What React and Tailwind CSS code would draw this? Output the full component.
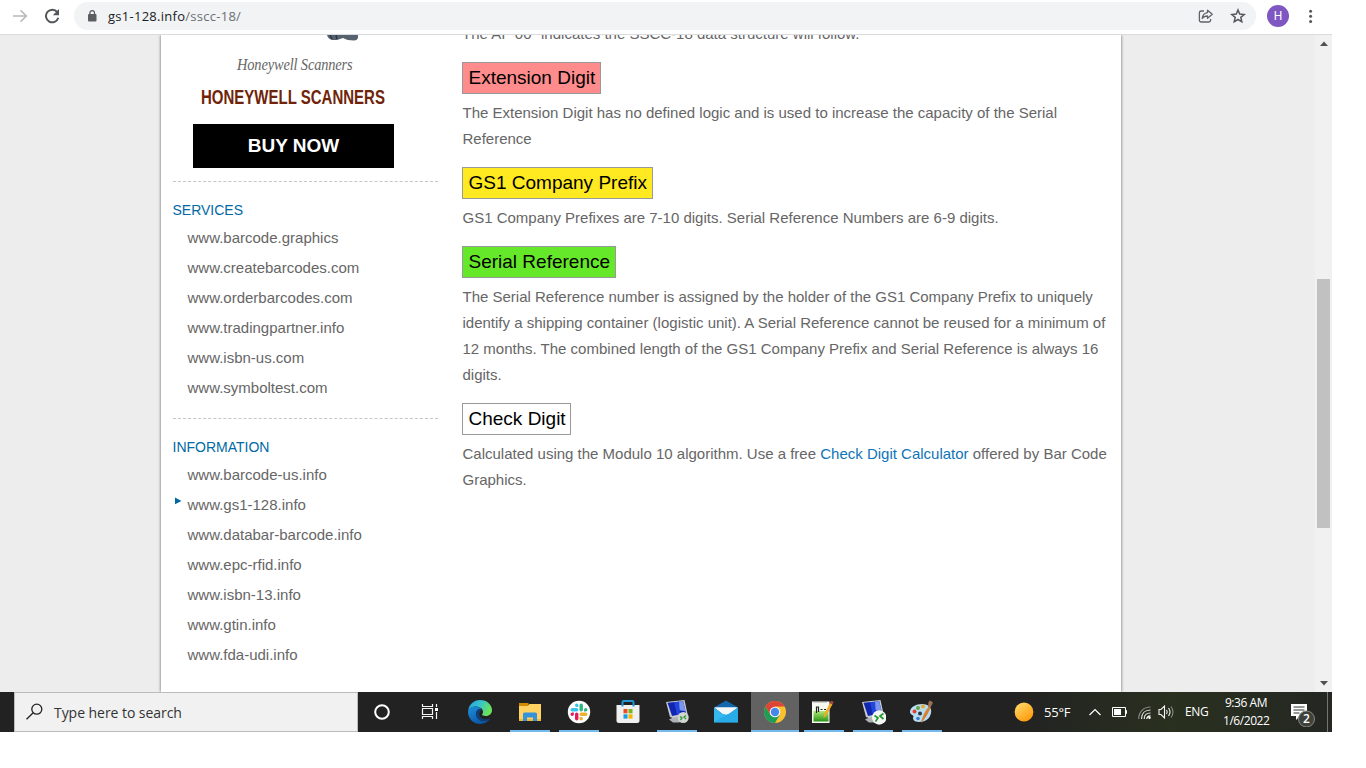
import React from "react";

const services = [
  "www.barcode.graphics",
  "www.createbarcodes.com",
  "www.orderbarcodes.com",
  "www.tradingpartner.info",
  "www.isbn-us.com",
  "www.symboltest.com",
];

const information = [
  "www.barcode-us.info",
  "www.gs1-128.info",
  "www.databar-barcode.info",
  "www.epc-rfid.info",
  "www.isbn-13.info",
  "www.gtin.info",
  "www.fda-udi.info",
];

function BrowserBar() {
  return (
    <header className="flex h-[35px] shrink-0 border-b border-[#d9dbde] bg-white">
      <div className="flex w-[74px] items-center pb-[3px] pl-[12px]">
        <svg width="16" height="16" viewBox="0 0 16 16" fill="none" stroke="#b6b8bb" strokeWidth="1.6">
          <path d="M1 8h13M8.5 2.2 14.3 8l-5.8 5.800" />
        </svg>
        <svg className="ml-[16px]" width="16" height="16" viewBox="0 0 16 16" fill="none">
          <path d="M13.300 4.200A6.300 6.300 0 1 0 14.300 9.800" stroke="#53575b" strokeWidth="2" />
          <path d="M15 1v6.200H8.800z" fill="#53575b" />
        </svg>
      </div>
      <div className="mt-[2px] flex h-[28px] w-[1182px] items-center rounded-full bg-[#f1f3f4] pl-[13px]">
        <svg width="10" height="12" viewBox="0 0 10 12" fill="none">
          <rect x="1" y="4" width="8.500" height="7.500" rx="1" fill="#5a5e63" />
          <path d="M2.900 5V2.900a2.300 2.300 0 0 1 4.600 0V5" stroke="#5a5e63" strokeWidth="1.300" />
        </svg>
        <span className="ml-[11px] w-[136px] whitespace-nowrap font-['Open_Sans',sans-serif] text-[13px] leading-[20px] tracking-[0.270px] text-[#202124]">
          gs1-128.info<span className="text-[#6b6f74]">/sscc-18/</span>
        </span>
        <svg className="ml-auto" width="16" height="16" viewBox="0 0 16 16" fill="none" stroke="#5f6368" strokeWidth="1.300" strokeLinejoin="round">
          <path d="M6 3H3.200A1.800 1.800 0 0 0 1.400 4.800v7.400A1.800 1.800 0 0 0 3.200 14h7.600a1.800 1.800 0 0 0 1.800-1.800V11" />
          <path d="M9.500 2.200 14.300 6.300 9.500 10.300V8C7 8 5.300 8.800 4.200 10.500 4.500 7.300 6.300 5 9.500 4.600z" />
        </svg>
        <svg className="ml-[16px] mr-[10px]" width="16" height="16" viewBox="0 0 16 16" fill="none" stroke="#55595e" strokeWidth="1.500">
          <path d="m8 2 1.700 4.100 4.500.4-3.400 2.900 1 4.400L8 11.500l-3.800 2.300 1-4.400-3.400-2.900 4.500-.4z" />
        </svg>
      </div>
      <div className="ml-[11px] mt-[5px] flex h-[22px] w-[22px] items-center justify-center rounded-full bg-[#7e57c2] font-['Roboto',sans-serif] text-[12px] text-white">
        H
      </div>
      <svg className="ml-[20px] mt-[9px]" width="4" height="15" viewBox="0 0 4 15" fill="#54585c">
        <circle cx="1.600" cy="2.200" r="1.500" />
        <circle cx="1.600" cy="7.300" r="1.500" />
        <circle cx="1.600" cy="12.400" r="1.500" />
      </svg>
    </header>
  );
}

function LinkGroup({ title, items, current }) {
  return (
    <section className="h-[237px] shrink-0 border-t border-dashed border-[#c6c6c6] pt-[16px] text-[15px]">
      <h3 className="mb-px h-[24px] text-[14px] leading-[24px] text-[#0069a5]">{title}</h3>
      <ul>
        {items.map((item) => (
          <li key={item} className="flex h-[30px] leading-[30px] text-[#666]">
            <span className="w-[15px] shrink-0 pl-[2px] pt-[7px]">
              {item === current && (
                <svg width="7" height="8" viewBox="0 0 7 8" fill="#0069a5">
                  <path d="M0 0.500 6.500 3.900 0 7.300z" />
                </svg>
              )}
            </span>
            <span className="whitespace-nowrap">{item}</span>
          </li>
        ))}
      </ul>
    </section>
  );
}

function Sidebar() {
  return (
    <aside className="w-[265px] shrink-0">
      <div className="flex h-[146px] flex-col pl-[20.500px]">
        <svg className="ml-[134px] shrink-0" width="34" height="6" viewBox="0 0 34 6">
          <path d="M0 0h31v3q-1 2.500-4 2.500-7 0-11-2.500L10 5H5Q1 4 0 0z" fill="#56636f" />
          <path d="M3 0 5 4M9 0l1 4" stroke="#2b3543" strokeWidth="1.500" />
        </svg>
        <div className="ml-[44px] mt-[11px] h-[26px] origin-left scale-x-[0.900] whitespace-nowrap font-['Liberation_Serif',serif] text-[16px] italic leading-[26px] tracking-[-0.150px] text-[#666]">
          Honeywell Scanners
        </div>
        <div className="ml-[8px] mt-[5px] h-[28px] origin-left scale-x-[0.750] whitespace-nowrap text-[20px] font-bold leading-[28px] text-[#6f2409]">
          HONEYWELL SCANNERS
        </div>
        <div className="mt-[13px] flex h-[44px] w-[201px] items-center justify-center bg-black text-[19px] font-bold text-white">
          BUY NOW
        </div>
      </div>
      <LinkGroup title="SERVICES" items={services} />
      <LinkGroup title="INFORMATION" items={information} current="www.gs1-128.info" />
    </aside>
  );
}

function Topic({ title, color, width, lines }) {
  return (
    <section className="mb-[15px]">
      <h2 className={`flex h-[32px] items-center whitespace-nowrap border border-[#999] pl-[5.500px] text-[19px] leading-[30px] text-black ${color} ${width}`}>
        {title}
      </h2>
      <div className="pl-[0.500px] pt-[6px]">
        {lines.map((line, i) => (
          <p key={i} className="h-[26px] whitespace-nowrap leading-[26px]">{line}</p>
        ))}
      </div>
    </section>
  );
}

function Article() {
  return (
    <article className="ml-[24.500px] text-[15px] text-[#666]">
      <p className="-mt-[14px] mb-[15px] h-[26px] whitespace-nowrap leading-[26px]">
        The AI &quot;00&quot; indicates the SSCC-18 data structure will follow.
      </p>
      <Topic
        title="Extension Digit"
        color="bg-[#ff8c8c]"
        width="w-[139px]"
        lines={[
          "The Extension Digit has no defined logic and is used to increase the capacity of the Serial",
          "Reference",
        ]}
      />
      <Topic
        title="GS1 Company Prefix"
        color="bg-[#ffe920]"
        width="w-[191px]"
        lines={["GS1 Company Prefixes are 7-10 digits. Serial Reference Numbers are 6-9 digits."]}
      />
      <Topic
        title="Serial Reference"
        color="bg-[#66e82a]"
        width="w-[154px]"
        lines={[
          "The Serial Reference number is assigned by the holder of the GS1 Company Prefix to uniquely",
          "identify a shipping container (logistic unit). A Serial Reference cannot be reused for a minimum of",
          "12 months. The combined length of the GS1 Company Prefix and Serial Reference is always 16",
          "digits.",
        ]}
      />
      <Topic
        title="Check Digit"
        color="bg-white"
        width="w-[109px]"
        lines={[
          <>
            Calculated using the Modulo 10 algorithm. Use a free{" "}
            <a className="text-[#0f74b8]">Check Digit Calculator</a> offered by Bar Code
          </>,
          "Graphics.",
        ]}
      />
    </article>
  );
}

function Scrollbar() {
  return (
    <div className="flex w-[17px] shrink-0 flex-col items-center bg-[#f1f1f1]">
      <svg className="mt-[6px]" width="8" height="5" viewBox="0 0 8 5" fill="#505050">
        <path d="M0 5 4 0.500 8 5z" />
      </svg>
      <div className="mt-[233px] h-[249px] w-[13px] bg-[#c1c1c1]" />
      <svg className="mb-[6px] mt-auto" width="8" height="5" viewBox="0 0 8 5" fill="#505050">
        <path d="M0 0 4 4.500 8 0z" />
      </svg>
    </div>
  );
}

function CortanaIcon() {
  return (
    <svg width="24" height="24" viewBox="0 0 24 24" fill="none">
      <circle cx="11" cy="12" r="6.800" stroke="#fff" strokeWidth="2" />
    </svg>
  );
}

function TaskViewIcon() {
  return (
    <svg width="24" height="24" viewBox="0 0 24 24" fill="none" stroke="#f4f4f4" strokeWidth="1.200">
      <path d="M2.500 4v2.500h10V4M2.500 19v-2.500h10V19M2.500 8.500h10v6h-10zM16.500 4v3M16.500 12v7" />
      <path d="M15 8h3v3h-3z" fill="#fff" stroke="none" />
    </svg>
  );
}

function EdgeIcon() {
  return (
    <svg width="24" height="24" viewBox="0 0 24 24">
      <defs>
        <linearGradient id="edgeTop" x1="0" y1="0" x2="1" y2="0.400">
          <stop offset="0" stopColor="#249fdf" />
          <stop offset="0.500" stopColor="#35c2cf" />
          <stop offset="1" stopColor="#6be35b" />
        </linearGradient>
        <linearGradient id="edgeLow" x1="0" y1="0" x2="0.700" y2="1">
          <stop offset="0" stopColor="#1e91df" />
          <stop offset="1" stopColor="#0b4f9c" />
        </linearGradient>
      </defs>
      <path d="M0.200 10.600C1 4.300 6 0 12 0c7.200 0 12 5 12 10.200 0 3.400-2.800 5.800-6.200 5.800-2.500 0-3.700-.8-3.700-1.500 0-.6.9-1 .9-2.600C15 8.800 11.700 6.500 7.600 6.500 4 6.500 1.300 8.300.2 10.600z" fill="url(#edgeTop)" />
      <path d="M0.100 11C1 8 4.300 6.400 7.600 6.400c2.500 0 5 .9 6.400 2.500-3.300-.4-5.800 1.700-5.800 5 0 4.500 4.500 8 9.800 6.700 2-.5 3.500-1.500 4.500-2.300C20.300 21.800 16.500 24 12.200 24 5 24-.7 18 .1 11z" fill="url(#edgeLow)" />
      <path d="M14 8.900c-3.300-.4-5.800 1.700-5.800 5 0 4.500 4.500 8 9.800 6.700 2-.5 3.500-1.500 4.500-2.300-5 2-10.800.6-11.200-3.900-.2-2 .9-4 2.700-5.500z" fill="#103f78" />
    </svg>
  );
}

function ExplorerIcon() {
  return (
    <svg width="24" height="24" viewBox="0 0 24 24">
      <path d="M1 3h9.500v3H1z" fill="#d28b00" />
      <path d="M1 6h8.500l2-2H23v17H1z" fill="#ffd262" />
      <path d="M1 19h22v2H1z" fill="#eeb83e" />
      <path d="M5 21v-7q0-1.500 1.500-1.500h11q1.500 0 1.500 1.500v7h-4v-3.500H9V21z" fill="#3692db" />
    </svg>
  );
}

function SlackIcon() {
  return (
    <svg width="24" height="24" viewBox="0 0 24 24">
      <circle cx="12" cy="12" r="11.200" fill="#fff" />
      <g transform="translate(3.500 3.500) scale(0.315)">
        <path d="M19.712.133a5.381 5.381 0 0 0-5.376 5.387 5.381 5.381 0 0 0 5.376 5.386h5.376V5.520A5.381 5.381 0 0 0 19.712.133m0 14.365H5.376A5.381 5.381 0 0 0 0 19.884a5.381 5.381 0 0 0 5.376 5.387h14.336a5.381 5.381 0 0 0 5.376-5.387 5.381 5.381 0 0 0-5.376-5.386" fill="#36c5f0" />
        <path d="M53.760 19.884a5.381 5.381 0 0 0-5.376-5.386 5.381 5.381 0 0 0-5.376 5.386v5.387h5.376a5.381 5.381 0 0 0 5.376-5.387m-14.336 0V5.520A5.381 5.381 0 0 0 34.048.133a5.381 5.381 0 0 0-5.376 5.387v14.364a5.381 5.381 0 0 0 5.376 5.387 5.381 5.381 0 0 0 5.376-5.387" fill="#2eb67d" />
        <path d="M34.048 54a5.381 5.381 0 0 0 5.376-5.387 5.381 5.381 0 0 0-5.376-5.386h-5.376v5.386A5.381 5.381 0 0 0 34.048 54m0-14.365h14.336a5.381 5.381 0 0 0 5.376-5.386 5.381 5.381 0 0 0-5.376-5.387H34.048a5.381 5.381 0 0 0-5.376 5.387 5.381 5.381 0 0 0 5.376 5.386" fill="#ecb22e" />
        <path d="M0 34.249a5.381 5.381 0 0 0 5.376 5.386 5.381 5.381 0 0 0 5.376-5.386v-5.387H5.376A5.381 5.381 0 0 0 0 34.249m14.336 0v14.364A5.381 5.381 0 0 0 19.712 54a5.381 5.381 0 0 0 5.376-5.387V34.250a5.381 5.381 0 0 0-5.376-5.387 5.381 5.381 0 0 0-5.376 5.387" fill="#e01e5a" />
      </g>
    </svg>
  );
}

function StoreIcon() {
  return (
    <svg width="24" height="24" viewBox="0 0 24 24">
      <path d="M0.500 5h23v15.500q0 2.500-2.500 2.500H3Q.5 23 .5 20.500z" fill="#f0f0f0" />
      <path d="M6.500 6.500V2.200q0-1.200 1.200-1.200h8.600q1.200 0 1.200 1.200v4.300" fill="none" stroke="#2296d6" strokeWidth="2" />
      <path d="M7.500 9h4v4.300h-4z" fill="#e84d25" />
      <path d="M12.500 9h4v4.300h-4z" fill="#74b61b" />
      <path d="M7.500 14.300h4v4.300h-4z" fill="#149fe3" />
      <path d="M12.500 14.300h4v4.300h-4z" fill="#f8b300" />
    </svg>
  );
}

function RemoteIcon({ large }) {
  return (
    <svg width="26" height="26" viewBox="0 0 26 26">
      <path d="M5 20.500 10 18l8-1 2 4-5 2.500H9z" fill="#aeb2b6" />
      <path d="M2 3 20.500 1l3 14L9 19l-3-1z" fill="#c9ccd2" />
      <path d="M3.500 3.700 19.300 2.300l2.700 12L8 17z" fill="#1025b0" />
      <path d="M12 3 19.300 2.300l2.200 10-6-1z" fill="#7b96ea" />
      <path d="M10 3.200 15 2.700l1 12.500-3 .7z" fill="#2145dd" />
      <circle cx="19.200" cy="18.500" r={large ? 7.200 : 5.500} fill={large ? "#f5f5f4" : "#d4d5d3"} />
      {large ? (
        <path d="m14.500 16.500 3.500 2.500-2.500 3.500M23.500 14.500l-3.500 2.500 3.500 3" fill="none" stroke="#239b2d" strokeWidth="1.700" />
      ) : (
        <path d="m16 17.500 2 1.500-1.500 2M22 16.500l-2 1.500 2 2" fill="none" stroke="#239b2d" strokeWidth="1.300" />
      )}
    </svg>
  );
}

function MailIcon() {
  return (
    <svg width="24" height="24" viewBox="0 0 24 24">
      <path d="M0 7.500 12 0.500l12 7V13H0z" fill="#1267ad" />
      <path d="M0.500 7.500h23L12 17z" fill="#f5f6f7" />
      <path d="M0 7.500v15h24v-15L15.500 14H8.500z" fill="#35b8ef" />
      <path d="M0 7.500 14 14 24 7.500v15H0z" fill="#29adeb" opacity="0" />
      <path d="M24 7.500v15H0z" fill="#1c9ee0" opacity="0.500" />
      <path d="M0.500 7.500h23L13 14.500h-2z" fill="#f5f6f7" />
    </svg>
  );
}

function ChromeIcon() {
  return (
    <svg width="24" height="24" viewBox="0 0 24 24">
      <circle cx="12" cy="12" r="11" fill="#fbc02d" />
      <path d="M2.470 6.500A11 11 0 0 1 21.530 6.500H12L7.240 14.750z" fill="#dc4437" />
      <path d="M2.470 6.500 7.240 14.750H16.760L12 23A11 11 0 0 1 2.470 6.500z" fill="#1f9d58" />
      <circle cx="12" cy="12" r="5.300" fill="#f7f7f7" />
      <circle cx="12" cy="12" r="4.200" fill="#4588ec" />
    </svg>
  );
}

function NotepadIcon() {
  return (
    <svg width="26" height="26" viewBox="0 0 26 26">
      <defs>
        <linearGradient id="page" x1="0" y1="0" x2="0" y2="1">
          <stop offset="0" stopColor="#b5e878" />
          <stop offset="1" stopColor="#249414" />
        </linearGradient>
      </defs>
      <path d="M2 2.500h17.500v21.500H2z" fill="#f7faf2" />
      <path d="M3.500 12h15v10.500h-15z" fill="url(#page)" />
      <path d="M3.500 3h14" stroke="#8b8b8b" strokeWidth="1.500" strokeDasharray="1 1" />
      <path d="M6.500 14V8h2v5M10.500 10.500h2M14 10.500h2" fill="none" stroke="#222" strokeWidth="1.200" />
      <path d="m13.500 19 .8-4L20 4l2.500 1.200L16 17z" fill="#f0aa23" />
      <path d="m20 4 1.200-2.300 2.500 1.200-1.200 2.300z" fill="#b74939" />
    </svg>
  );
}

function PaintIcon() {
  return (
    <svg width="26" height="26" viewBox="0 0 26 26">
      <path d="M2 13C2 8 8 5 14 5c7 0 10 4 9 9-1 6-6 9-12 9C6 23 4 20 5.500 17.500 6 16 2 16 2 13z" fill="#b8dcf1" />
      <circle cx="6.500" cy="12.500" r="2" fill="#e23e32" />
      <circle cx="10" cy="9" r="2" fill="#63a83e" />
      <circle cx="15" cy="7.500" r="2" fill="#e9a735" />
      <circle cx="12" cy="14.500" r="2" fill="#243744" />
      <circle cx="10" cy="19.500" r="1.800" fill="#3a78d0" />
      <path d="M13 24C14 18 17 12 20.500 8l2 1C20 15 17 20 13 24z" fill="#d68130" />
      <path d="m20 8 .5-5 1.500-1.500 3 2-2.500 5z" fill="#9d7152" />
    </svg>
  );
}

const tasks = [
  { id: "cortana", icon: <CortanaIcon />, line: "" },
  { id: "view", icon: <TaskViewIcon />, line: "" },
  { id: "edge", icon: <EdgeIcon />, line: "" },
  { id: "explorer", icon: <ExplorerIcon />, line: "w-[40px]" },
  { id: "slack", icon: <SlackIcon />, line: "w-[40px]" },
  { id: "store", icon: <StoreIcon />, line: "" },
  { id: "remote", icon: <RemoteIcon />, line: "w-[40px]" },
  { id: "mail", icon: <MailIcon />, line: "" },
  { id: "chrome", icon: <ChromeIcon />, line: "w-[48px]", active: true },
  { id: "notepad", icon: <NotepadIcon />, line: "w-[40px]" },
  { id: "remote2", icon: <RemoteIcon large />, line: "w-[40px]" },
  { id: "paint", icon: <PaintIcon />, line: "w-[40px]" },
];

const taskPadding = {
  edge: "pr-[2px]",
  notepad: "pr-[2px]",
  paint: "pr-[2px]",
};

function Tray() {
  return (
    <div className="flex w-[320px] shrink-0 items-center bg-linear-to-r from-[#222222] via-[#29301f] to-[#242722] font-['Open_Sans',sans-serif] text-[12px] text-white">
      <svg className="ml-[2px] shrink-0" width="20" height="20" viewBox="0 0 20 20">
        <defs>
          <linearGradient id="sun" x1="0" y1="0" x2="0.700" y2="1">
            <stop offset="0" stopColor="#ffdf71" />
            <stop offset="1" stopColor="#ff9a0b" />
          </linearGradient>
        </defs>
        <circle cx="10" cy="10" r="9.400" fill="url(#sun)" />
      </svg>
      <span className="ml-[10px] w-[44px] shrink-0 whitespace-nowrap pt-[2px] text-[13px] tracking-[-0.200px]">55°F</span>
      <svg className="shrink-0" width="14" height="10" viewBox="0 0 14 10" fill="none" stroke="#fff" strokeWidth="1.200">
        <path d="M1.500 8 7 2.500 12.500 8" />
      </svg>
      <svg className="ml-[10px] shrink-0" width="16" height="12" viewBox="0 0 16 12" fill="none" stroke="#fff">
        <path d="M0.500 1.500h13v9h-13zM13.500 4.500h1v3h-1" />
        <path d="M2 3h7v6H2z" fill="#fff" stroke="none" />
      </svg>
      <svg className="ml-[10px] shrink-0" width="14" height="14" viewBox="0 0 14 14" fill="none" strokeWidth="1.200">
        <path d="M.7 14C.7 7 5.500 2 12.500 2" stroke="#858981" />
        <path d="M3.500 14C3.500 8.500 7 5 12.500 5M6.200 14c0-4 2.500-6 6.300-6" stroke="#e0e2dd" />
        <path d="M8.700 14q.3-3 3.800-3.200" stroke="#fff" />
        <circle cx="11.500" cy="12.800" r="1.200" fill="#fff" />
      </svg>
      <svg className="ml-[6px] shrink-0" width="17" height="16" viewBox="0 0 17 16" fill="none" stroke="#f4f4f4" strokeWidth="1.100">
        <path d="M1 5.500h2L6.500 2v12L3 10.500H1zM8.500 6q1.500 2 0 4M10.500 4q3 4 0 8" />
        <path d="M13 2.500q4 5.500 0 11" stroke="#898d84" />
      </svg>
      <span className="ml-[10px] w-[38px] shrink-0 text-[12px] tracking-[-0.350px]">ENG</span>
      <div className="w-[46px] shrink-0 text-center text-[12px] leading-[18px] tracking-[-0.450px]">
        <div className="whitespace-nowrap">9:36 AM</div>
        <div className="whitespace-nowrap">1/6/2022</div>
      </div>
      <div className="relative ml-[22px] h-[30px] w-[26px] shrink-0">
        <svg width="26" height="30" viewBox="0 0 26 30" fill="none">
          <path d="M0 7h16v12H9l-4 4v-4H0z" fill="#fff" />
          <path d="M2.500 10h11M2.500 13h11M2.500 16h6" stroke="#30352c" />
          <circle cx="15.500" cy="22" r="8" fill="#3e423b" stroke="#878a82" />
        </svg>
        <span className="absolute left-[8px] top-[14px] w-[15px] text-center text-[12px] font-semibold leading-[16px]">2</span>
      </div>
      <div className="ml-auto mr-[4px] h-full w-px bg-[#74776e]" />
    </div>
  );
}

function Taskbar() {
  return (
    <footer className="flex h-[40px] shrink-0 bg-[#232223]">
      <div className="ml-[14px] flex w-[344px] shrink-0 items-center border border-[#bcbcbc] bg-[#f1f1f1] pl-[10px]">
        <svg width="19" height="18" viewBox="0 0 19 18" fill="none" stroke="#222" strokeWidth="1.300">
          <circle cx="11.800" cy="6.200" r="5" />
          <path d="M8.200 9.800 1.500 16.300" />
        </svg>
        <span className="ml-[10px] whitespace-nowrap font-['Open_Sans',sans-serif] text-[14px] tracking-[-0.050px] text-[#333]">
          Type here to search
        </span>
      </div>
      <nav className="flex">
        {tasks.map((task) => (
          <div
            key={task.id}
            className={`ml-px flex h-[40px] w-[48px] shrink-0 flex-col items-center ${task.active ? "bg-[#636263]" : ""}`}
          >
            <div className={`flex h-[38px] w-full items-center justify-center pt-[2px] ${taskPadding[task.id] || ""}`}>{task.icon}</div>
            <div className={`h-[2px] ${task.line ? "bg-[#76b9ed]" : ""} ${task.line}`} />
          </div>
        ))}
      </nav>
      <div className="flex-1" />
      <Tray />
    </footer>
  );
}

export default function App() {
  return (
    <div className="h-[768px] w-[1366px] overflow-hidden bg-white font-['Liberation_Sans',Arial,sans-serif]">
      <div className="flex h-[732px] w-[1332px] flex-col">
        <BrowserBar />
        <div className="flex h-[657px] shrink-0 overflow-hidden bg-[#ededed]">
          <main className="ml-[161px] mr-[194px] flex w-[960px] shrink-0 bg-white pl-[11.500px] shadow-[0_0_3px_rgba(0,0,0,0.6)]">
            <Sidebar />
            <Article />
          </main>
          <Scrollbar />
        </div>
        <Taskbar />
      </div>
    </div>
  );
}
